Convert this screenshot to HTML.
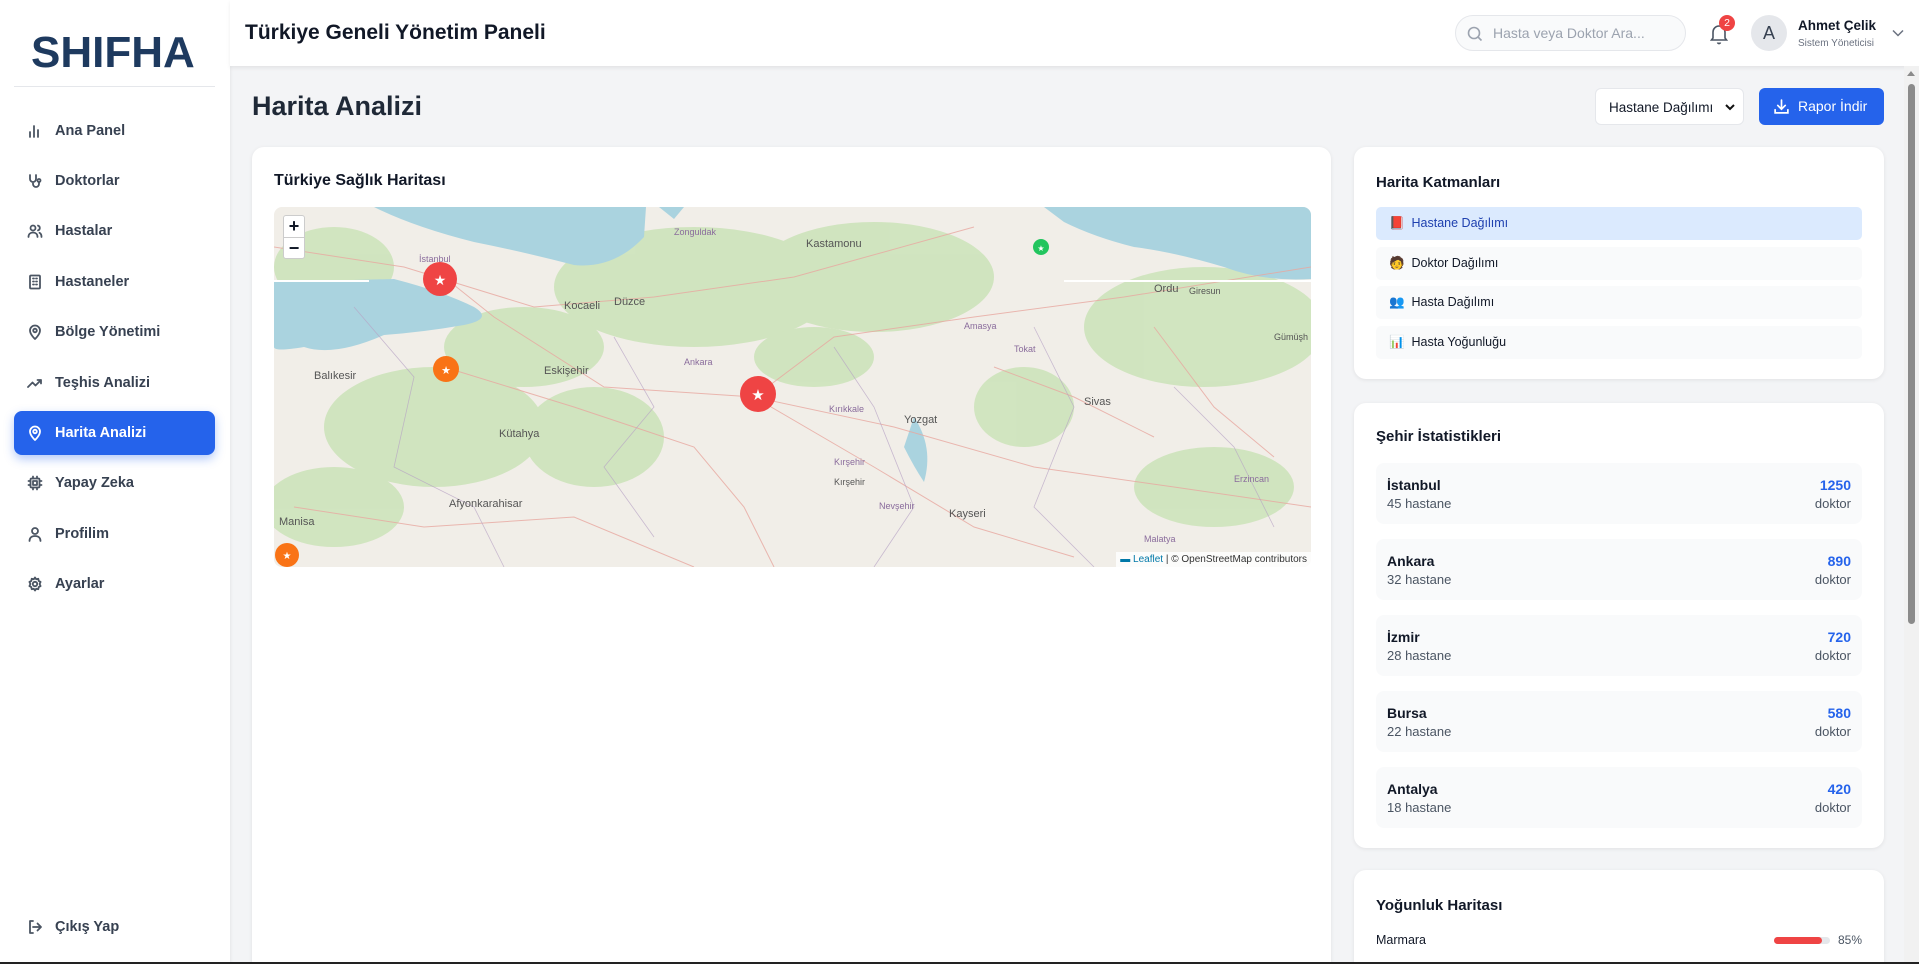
<!DOCTYPE html>
<html><head><meta charset="utf-8"><style>
*{box-sizing:border-box;margin:0;padding:0}
html,body{width:1919px;height:964px;overflow:hidden}
body{font-family:"Liberation Sans",sans-serif;background:#f3f4f6;position:relative;color:#111827}
#wrap{position:absolute;left:0;top:0;width:1919px;height:964px;overflow:hidden}
.sb{position:absolute;left:0;top:0;width:230px;height:964px;background:#fff;box-shadow:1px 0 3px rgba(0,0,0,.06)}
.logo{position:absolute;left:31px;top:28px;font-size:44px;font-weight:bold;color:#1e3a5f}
.sep{position:absolute;left:14px;top:86px;width:201px;height:1px;background:#e5e7eb}
.mi{position:absolute;left:14px;width:201px;height:44px;display:flex;align-items:center;padding-left:13px;font-size:14.5px;font-weight:bold;color:#374151;border-radius:8px}
.mi svg{display:block;width:16px;height:16px;margin-right:12px;stroke:#4b5563;fill:none;stroke-width:1.8;stroke-linecap:round;stroke-linejoin:round}
.mi.act{background:#2563eb;color:#fff;box-shadow:0 4px 10px rgba(37,99,235,.35)}
.mi.act svg{stroke:#fff}
.hd{position:absolute;left:230px;top:0;right:0;height:66px;background:#fff;box-shadow:0 2px 4px rgba(0,0,0,.07)}
.card{position:absolute;background:#fff;border-radius:12px;box-shadow:0 1px 4px rgba(0,0,0,.08)}
.ttl{position:absolute;font-size:16px;font-weight:bold;color:#111827}
.ly{position:absolute;left:22px;width:486px;height:33px;background:#f9fafb;border-radius:5px;font-size:12.5px;display:flex;align-items:center;padding-left:13px;color:#111827}
.st{position:absolute;left:22px;width:486px;height:61px;background:#f9fafb;border-radius:8px;font-size:13px}
.st .n{position:absolute;left:11px;top:14px;font-weight:bold;font-size:14px}
.st .h{position:absolute;left:11px;top:33px;color:#4b5563}
.st .v{position:absolute;right:11px;top:14px;font-weight:bold;color:#2563eb;font-size:14px}
.st .d{position:absolute;right:11px;top:33px;color:#4b5563}
</style></head><body><div id="wrap">
<div class="sb">
<div class="logo">SHIFHA</div>
<div class="sep"></div>
<div class="mi" style="top:109px"><svg viewBox="0 0 16 16"><path d="M3 14V9M7 14V3M11 14V7"/></svg>Ana Panel</div>
<div class="mi" style="top:159px"><svg viewBox="0 0 16 16"><path d="M3 2v4a3 3 0 006 0V2M6 9v2a3 3 0 006 0V9"/><circle cx="12" cy="7.5" r="1.5"/></svg>Doktorlar</div>
<div class="mi" style="top:209px"><svg viewBox="0 0 16 16"><circle cx="6" cy="5" r="2.5"/><path d="M1.5 14c0-3 2-4.5 4.5-4.5S10.5 11 10.5 14M11 2.6a2.5 2.5 0 010 4.8M12.5 9.8c1.3.6 2 2 2 4.2"/></svg>Hastalar</div>
<div class="mi" style="top:260px"><svg viewBox="0 0 16 16"><rect x="3" y="1.5" width="10" height="13" rx="1"/><path d="M6 4.5h1M9 4.5h1M6 7.5h1M9 7.5h1M6 10.5h1M9 10.5h1"/></svg>Hastaneler</div>
<div class="mi" style="top:310px"><svg viewBox="0 0 16 16"><path d="M8 15s5-4.5 5-8.5a5 5 0 00-10 0C3 10.5 8 15 8 15z"/><circle cx="8" cy="6.5" r="1.8"/></svg>Bölge Yönetimi</div>
<div class="mi" style="top:361px"><svg viewBox="0 0 16 16"><path d="M1 12l4.5-4.5 3 3L14 5M10.5 5H14v3.5"/></svg>Teşhis Analizi</div>
<div class="mi act" style="top:411px"><svg viewBox="0 0 16 16"><path d="M8 15s5-4.5 5-8.5a5 5 0 00-10 0C3 10.5 8 15 8 15z"/><circle cx="8" cy="6.5" r="1.8"/></svg>Harita Analizi</div>
<div class="mi" style="top:461px"><svg viewBox="0 0 16 16"><rect x="3.5" y="3.5" width="9" height="9" rx="1"/><rect x="6" y="6" width="4" height="4"/><path d="M6 1.5v2M10 1.5v2M6 12.5v2M10 12.5v2M1.5 6h2M1.5 10h2M12.5 6h2M12.5 10h2"/></svg>Yapay Zeka</div>
<div class="mi" style="top:512px"><svg viewBox="0 0 16 16"><circle cx="8" cy="5" r="3"/><path d="M2.5 15c0-3.5 2.5-5 5.5-5s5.5 1.5 5.5 5"/></svg>Profilim</div>
<div class="mi" style="top:562px"><svg viewBox="0 0 16 16"><circle cx="8" cy="8" r="2.2"/><path d="M8 1.5l1.2 1.8 2.1-.5.4 2.1 1.9 1L12.6 8l1 2.1-1.9 1-.4 2.1-2.1-.5L8 14.5l-1.2-1.8-2.1.5-.4-2.1-1.9-1L3.4 8l-1-2.1 1.9-1 .4-2.1 2.1.5z"/></svg>Ayarlar</div>
<div class="mi" style="top:905px"><svg viewBox="0 0 16 16"><path d="M6 14H3V2h3M10.5 11.5L14 8l-3.5-3.5M14 8H6"/></svg>Çıkış Yap</div>
</div>

<div class="hd">
<div style="position:absolute;left:15px;top:21px;font-size:21px;font-weight:bold;color:#111827">Türkiye Geneli Yönetim Paneli</div>
<div style="position:absolute;left:1225px;top:15px;width:231px;height:36px;border:1px solid #e5e7eb;background:#f9fafb;border-radius:18px;font-size:14px;color:#9ca3af;padding:9px 0 0 37px">Hasta veya Doktor Ara...
<svg style="position:absolute;left:11px;top:10px" width="16" height="16" viewBox="0 0 16 16" fill="none" stroke="#9ca3af" stroke-width="1.6"><circle cx="7" cy="7" r="5.5"/><path d="M11 11l3.5 3.5"/></svg></div>
<svg style="position:absolute;left:1479px;top:23px" width="20" height="22" viewBox="0 0 20 22" fill="none" stroke="#4b5563" stroke-width="1.6"><path d="M4 15V9a6 6 0 0112 0v6l1.5 2h-15z"/><path d="M8.5 19.5a1.6 1.6 0 003 0"/></svg>
<div style="position:absolute;left:1489px;top:15px;width:16px;height:16px;border-radius:50%;background:#ef4444;color:#fff;font-size:10.5px;text-align:center;line-height:16px">2</div>
<div style="position:absolute;left:1521px;top:15px;width:36px;height:36px;border-radius:50%;background:#e5e7eb;color:#374151;font-size:18px;text-align:center;line-height:36px">A</div>
<div style="position:absolute;left:1568px;top:18px;font-size:13.5px;font-weight:bold">Ahmet Çelik</div>
<div style="position:absolute;left:1568px;top:38px;font-size:10px;color:#6b7280">Sistem Yöneticisi</div>
<svg style="position:absolute;left:1662px;top:28px" width="12" height="10" viewBox="0 0 12 10" fill="none" stroke="#6b7280" stroke-width="1.5"><path d="M1 2.5l5 5 5-5"/></svg>
</div>
<div style="position:absolute;left:1904px;top:66px;width:15px;height:898px;background:#f1f1f1"><div style="position:absolute;left:4px;top:18px;width:7px;height:540px;background:#8b8b8b;border-radius:4px"></div><div style="position:absolute;left:3px;top:5px;border:4.5px solid transparent;border-bottom:5px solid #8b8b8b;border-top:0"></div></div>

<div style="position:absolute;left:252px;top:91px;font-size:27px;font-weight:bold;color:#1f2937">Harita Analizi</div>
<div style="position:absolute;left:1595px;top:88px;width:149px;height:37px;background:#fff;border:1px solid #e5e7eb;border-radius:6px;font-size:13.5px;padding:11px 0 0 13px">Hastane Dağılımı
<svg style="position:absolute;right:8px;top:14px" width="10" height="8" viewBox="0 0 10 8" fill="none" stroke="#111" stroke-width="2"><path d="M1 2l4 4 4-4"/></svg></div>
<div style="position:absolute;left:1759px;top:88px;width:125px;height:37px;background:#2563eb;border-radius:6px;color:#fff;font-size:14px;padding:10px 0 0 39px">Rapor İndir
<svg style="position:absolute;left:14px;top:10px" width="17" height="17" viewBox="0 0 16 16" fill="none" stroke="#fff" stroke-width="1.6" stroke-linecap="round"><path d="M8 2v8M4.5 7L8 10.5 11.5 7M2 11v3h12v-3"/></svg></div>

<div class="card" style="left:252px;top:147px;width:1079px;height:830px">
<div class="ttl" style="left:22px;top:25px">Türkiye Sağlık Haritası</div>
<div style="position:absolute;left:22px;top:60px;width:1037px;height:360px;border-radius:8px;overflow:hidden;background:#f1eee8">
<svg width="1037" height="360" viewBox="0 0 1037 360">
<g fill="#c9e2b5" opacity=".8">
<ellipse cx="60" cy="60" rx="60" ry="40"/><ellipse cx="420" cy="80" rx="140" ry="60"/><ellipse cx="600" cy="70" rx="120" ry="55"/><ellipse cx="250" cy="140" rx="80" ry="40"/><ellipse cx="160" cy="220" rx="110" ry="60"/><ellipse cx="320" cy="230" rx="70" ry="50"/><ellipse cx="930" cy="120" rx="120" ry="60"/><ellipse cx="750" cy="200" rx="50" ry="40"/><ellipse cx="60" cy="300" rx="70" ry="40"/><ellipse cx="940" cy="280" rx="80" ry="40"/><ellipse cx="540" cy="150" rx="60" ry="30"/></g>
<path d="M100 0H372L370 30Q340 62 300 58Q250 45 200 35Q140 20 100 0Z" fill="#aad3df"/>
<path d="M385 0H410L400 12Z" fill="#aad3df"/>
<path d="M770 0H1037V72Q990 75 950 60Q900 45 860 40Q820 30 790 15Z" fill="#aad3df"/>
<path d="M0 75L120 72Q170 85 200 100Q220 112 190 118Q150 125 110 128Q60 150 30 140Q0 145 0 140Z" fill="#aad3df"/>
<path d="M640 210Q660 240 650 275Q640 260 630 240Z" fill="#aad3df"/>
<g fill="none" stroke="#e8a8a0" stroke-width="1" opacity=".8">
<path d="M0 40L130 60L260 100L380 90L520 70L700 20"/><path d="M170 70L220 110L330 180L480 190L600 260L700 320L800 350"/><path d="M480 190L560 130L700 110L850 90L1037 60"/><path d="M480 190L620 220L760 260L900 280L1037 300"/><path d="M170 160L300 200L420 240L470 300L500 360"/><path d="M20 300L150 320L300 310L420 360"/><path d="M880 120L940 200L1000 250"/><path d="M720 160L800 190L880 230"/></g>
<g fill="none" stroke="#b7a3c4" stroke-width=".8" opacity=".7">
<path d="M80 100L140 170L120 260L200 300L230 360"/><path d="M340 130L380 200L330 260L380 330"/><path d="M560 140L600 200L640 300L600 360"/><path d="M760 120L800 200L760 300L820 360"/><path d="M900 180L960 240L1000 320"/></g>
<g font-size="11" fill="#555" font-family="Liberation Sans">
<text x="290" y="102">Kocaeli</text><text x="340" y="98">Düzce</text><text x="270" y="167">Eskişehir</text><text x="40" y="172">Balıkesir</text><text x="225" y="230">Kütahya</text><text x="175" y="300">Afyonkarahisar</text><text x="5" y="318">Manisa</text><text x="630" y="216">Yozgat</text><text x="810" y="198">Sivas</text><text x="675" y="310">Kayseri</text><text x="532" y="40">Kastamonu</text><text x="880" y="85">Ordu</text><text x="915" y="87" font-size="9">Giresun</text><text x="400" y="28" font-size="9" fill="#8a6c9c">Zonguldak</text><text x="410" y="158" font-size="9" fill="#8a6c9c">Ankara</text><text x="555" y="205" font-size="9" fill="#8a6c9c">Kırıkkale</text><text x="560" y="258" font-size="9" fill="#8a6c9c">Kırşehir</text><text x="560" y="278" font-size="9">Kırşehir</text><text x="605" y="302" font-size="9" fill="#8a6c9c">Nevşehir</text><text x="690" y="122" font-size="9" fill="#8a6c9c">Amasya</text><text x="740" y="145" font-size="9" fill="#8a6c9c">Tokat</text><text x="1000" y="133" font-size="9">Gümüşh</text><text x="960" y="275" font-size="9" fill="#8a6c9c">Erzincan</text><text x="870" y="335" font-size="9" fill="#8a6c9c">Malatya</text><text x="145" y="55" font-size="9" fill="#8a6c9c">İstanbul</text></g>
<rect x="0" y="73" width="95" height="2" fill="#fff"/><rect x="790" y="73" width="247" height="2" fill="#fff"/>
<g><circle cx="166" cy="72" r="17" fill="#ef4444"/><circle cx="172" cy="162" r="13" fill="#f97316"/><circle cx="484" cy="187" r="18" fill="#ef4444"/><circle cx="767" cy="40" r="8" fill="#22c55e"/><circle cx="13" cy="348" r="12" fill="#f97316"/></g>
<g fill="#fff" font-size="14" text-anchor="middle" font-family="DejaVu Sans"><text x="166" y="78">★</text><text x="172" y="167" font-size="11">★</text><text x="484" y="193" font-size="15">★</text><text x="767" y="44" font-size="8">★</text><text x="13" y="352" font-size="10">★</text></g>
</svg>
<div style="position:absolute;left:9px;top:8px;width:22px;height:44px;background:#fff;border:1px solid #ccc;border-radius:3px;font-size:18px;font-weight:bold;text-align:center;line-height:21px">+<div style="border-top:1px solid #ccc">−</div></div>
<div style="position:absolute;right:0;bottom:0;background:rgba(255,255,255,.8);font-size:10px;padding:2px 4px;color:#333"><span style="color:#0078a8">▬ Leaflet</span> | © OpenStreetMap contributors</div>
</div>
</div>

<div class="card" style="left:1354px;top:147px;width:530px;height:232px">
<div class="ttl" style="left:22px;top:27px;font-size:15px">Harita Katmanları</div>
<div class="ly" style="top:60px;background:#dbeafe;color:#1e40af">📕&nbsp; Hastane Dağılımı</div>
<div class="ly" style="top:100px">🧑&nbsp; Doktor Dağılımı</div>
<div class="ly" style="top:139px">👥&nbsp; Hasta Dağılımı</div>
<div class="ly" style="top:179px">📊&nbsp; Hasta Yoğunluğu</div>
</div>

<div class="card" style="left:1354px;top:403px;width:530px;height:445px">
<div class="ttl" style="left:22px;top:25px;font-size:15px">Şehir İstatistikleri</div>
<div class="st" style="top:60px"><span class="n">İstanbul</span><span class="h">45 hastane</span><span class="v">1250</span><span class="d">doktor</span></div>
<div class="st" style="top:136px"><span class="n">Ankara</span><span class="h">32 hastane</span><span class="v">890</span><span class="d">doktor</span></div>
<div class="st" style="top:212px"><span class="n">İzmir</span><span class="h">28 hastane</span><span class="v">720</span><span class="d">doktor</span></div>
<div class="st" style="top:288px"><span class="n">Bursa</span><span class="h">22 hastane</span><span class="v">580</span><span class="d">doktor</span></div>
<div class="st" style="top:364px"><span class="n">Antalya</span><span class="h">18 hastane</span><span class="v">420</span><span class="d">doktor</span></div>
</div>

<div class="card" style="left:1354px;top:870px;width:530px;height:120px">
<div class="ttl" style="left:22px;top:27px;font-size:15px">Yoğunluk Haritası</div>
<div style="position:absolute;left:22px;top:63px;font-size:12.5px">Marmara</div>
<div style="position:absolute;left:420px;top:67px;width:56px;height:7px;border-radius:4px;background:#e5e7eb"><div style="width:85%;height:7px;border-radius:4px;background:#ef4444"></div></div>
<div style="position:absolute;right:22px;top:63px;font-size:12px;color:#4b5563">85%</div>
</div>
<div style="position:absolute;left:0;top:962px;width:1919px;height:2px;background:#222;z-index:10"></div>
</div></body></html>
